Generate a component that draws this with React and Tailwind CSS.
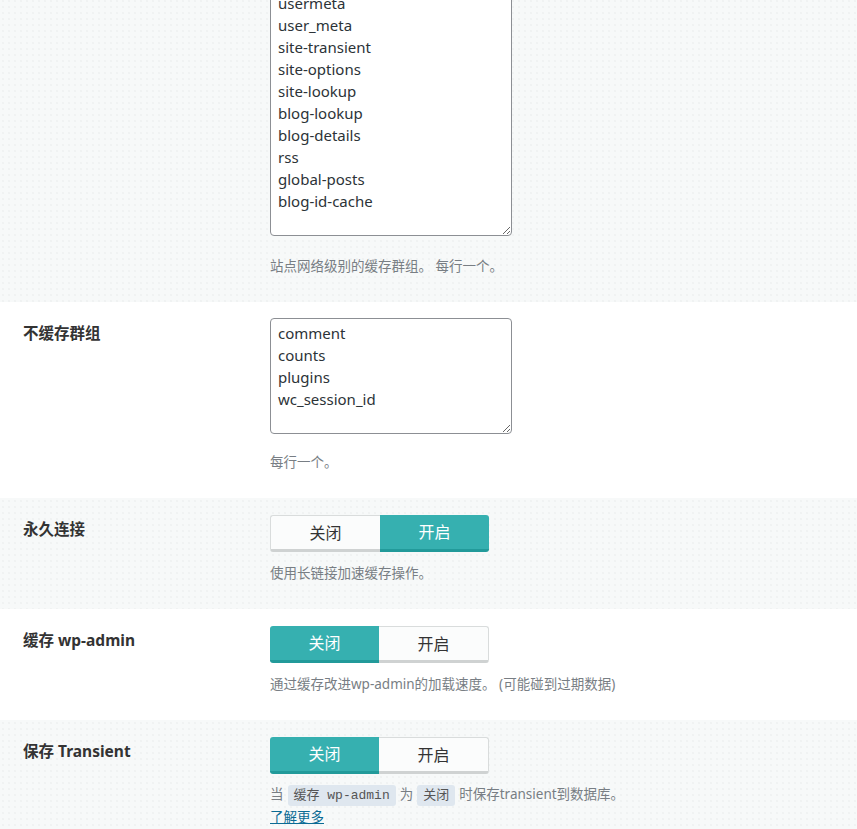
import React from "react";

const FONT = "font-['Noto_Sans','Noto_Sans_CJK_SC',sans-serif]";

const globalGroups = [
  "users",
  "userlogins",
  "useremail",
  "userslugs",
  "usermeta",
  "user_meta",
  "site-transient",
  "site-options",
  "site-lookup",
  "blog-lookup",
  "blog-details",
  "rss",
  "global-posts",
  "blog-id-cache",
].join("\n");

const nonCache = ["comment", "counts", "plugins", "wc_session_id"].join("\n");

function Row({ gray, label, children, className = "" }) {
  return (
    <div
      className={
        "grid grid-cols-[247px_1fr] pl-[23px] pt-[16px] pb-[26px] " +
        (gray
          ? "bg-[#f7f9f9] bg-[radial-gradient(circle,#eef1f1_0.6px,transparent_1px)] bg-[length:6px_6px] "
          : "bg-white ") +
        className
      }
    >
      <div className="text-[15.5px] font-bold leading-[30px] text-[#333]">{label}</div>
      <div>{children}</div>
    </div>
  );
}

function Desc({ children, className = "" }) {
  return (
    <div className={"text-[13.5px] leading-[20px] text-[#787e84] " + className}>{children}</div>
  );
}

function Toggle({ on }) {
  const active = "bg-[#36b0b0] text-white border-b-[3px] border-b-[#229a9a]";
  const inactive =
    "bg-[#fbfcfc] text-[#333] border border-[#d9dcdc] border-b-[3px] border-b-[#cfd2d2]";
  return (
    <div className="flex w-[219px] h-[37px] text-[16px] mt-[1px]">
      <div
        className={
          "flex-1 flex items-center justify-center rounded-l-[3px] " +
          (on ? inactive + " border-r-0" : active)
        }
      >
        关闭
      </div>
      <div
        className={
          "flex-1 flex items-center justify-center rounded-r-[3px] " +
          (on ? active : inactive + " border-l-0")
        }
      >
        开启
      </div>
    </div>
  );
}

function Code({ children }) {
  return (
    <code className="mx-[4px] rounded-[3px] bg-[#dfe7ef] px-[6px] py-[3px] font-['Liberation_Mono','Noto_Sans_CJK_SC',monospace] text-[13px] text-[#555]">
      {children}
    </code>
  );
}

export default function App() {
  return (
    <div className={FONT + " w-[857px] h-[829px] overflow-hidden bg-white"}>
      <Row gray label="" className="-mt-[116px]">
        <textarea
          readOnly
          defaultValue={globalGroups}
          className="block h-[336px] w-[242px] overflow-hidden rounded-[4px] border border-[#8c8f94] bg-white px-[7px] pt-[3px] pb-[1px] text-[15px] leading-[22px] text-[#2c3338] outline-none"
        />
        <Desc className="mt-[20px]">站点网络级别的缓存群组。 每行一个。</Desc>
      </Row>
      <Row label="不缓存群组">
        <textarea
          readOnly
          defaultValue={nonCache}
          className="block h-[116px] w-[242px] overflow-hidden rounded-[4px] border border-[#8c8f94] bg-white px-[7px] pt-[3px] pb-[1px] text-[15px] leading-[22px] text-[#2c3338] outline-none"
        />
        <Desc className="mt-[18px]">每行一个。</Desc>
      </Row>
      <Row gray label="永久连接">
        <Toggle on />
        <Desc className="mt-[11px]">使用长链接加速缓存操作。</Desc>
      </Row>
      <Row label="缓存 wp-admin">
        <Toggle on={false} />
        <Desc className="mt-[11px]">通过缓存改进wp-admin的加载速度。 (可能碰到过期数据)</Desc>
      </Row>
      <Row gray label="保存 Transient">
        <Toggle on={false} />
        <Desc className="mt-[9px] leading-[22px]">
          当<Code>缓存 wp-admin</Code>为<Code>关闭</Code>时保存transient到数据库。
        </Desc>
        <a href="#" className="block w-fit text-[13.5px] leading-[21px] text-[#0a6b94] underline">
          了解更多
        </a>
      </Row>
    </div>
  );
}
